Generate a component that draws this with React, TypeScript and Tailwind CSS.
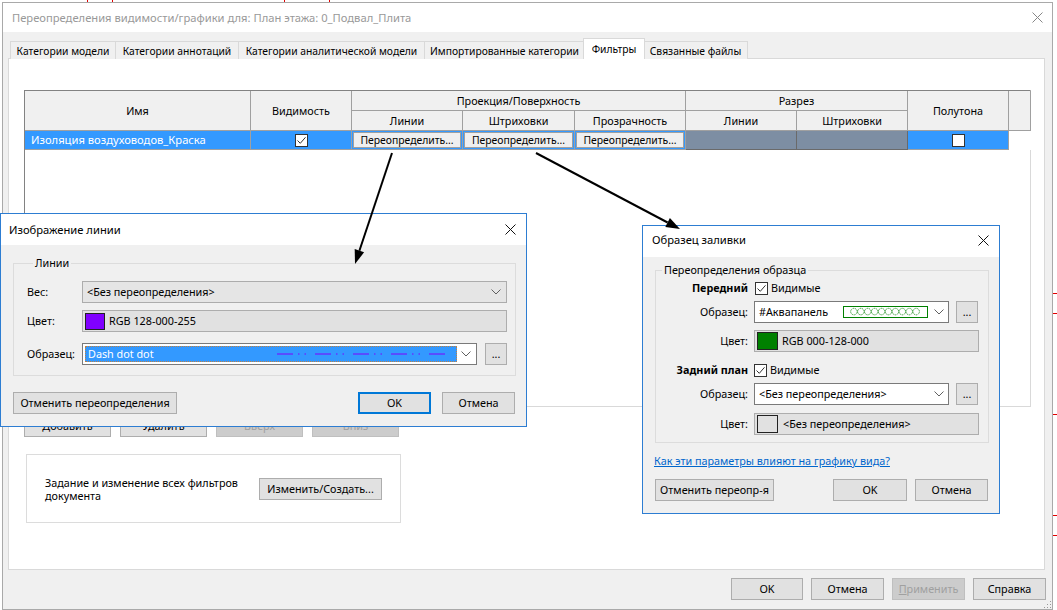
import React from "react";

const hatch = "bg-[#7d8ea3]";

function CloseX() {
  return (
    <svg width="11" height="11" viewBox="0 0 11 11">
      <path d="M0.5 0.5 L10.5 10.5 M10.5 0.5 L0.5 10.5" stroke="#111" strokeWidth="1" />
    </svg>
  );
}

function Chevron() {
  return (
    <svg width="10" height="6" viewBox="0 0 10 6">
      <path d="M0.5 0.5 L5 5 L9.5 0.5" fill="none" stroke="#606060" strokeWidth="1" />
    </svg>
  );
}

function Check({ checked }: { checked: boolean }) {
  return (
    <span className="inline-flex w-[13px] h-[13px] border border-[#333] bg-white items-center justify-center">
      {checked && (
        <svg width="11" height="11" viewBox="0 0 11 11">
          <path d="M1.5 5.5 L4.3 8.3 L9.5 2.3" fill="none" stroke="#333" strokeWidth="1" />
        </svg>
      )}
    </span>
  );
}

function Btn({
  children,
  className = "",
  primary,
  disabled,
}: {
  children: React.ReactNode;
  className?: string;
  primary?: boolean;
  disabled?: boolean;
}) {
  const look = primary
    ? "border-2 border-[#0078d7] bg-[#e1e1e1]"
    : disabled
    ? "border border-[#bfbfbf] bg-[#cccccc] text-[#a0a0a0]"
    : "border border-[#adadad] bg-[#e1e1e1]";
  return (
    <div className={`h-[22px] flex items-center justify-center shrink-0 whitespace-nowrap ${look} ${className}`}>
      {children}
    </div>
  );
}

function Dots() {
  return (
    <div className="w-[22px] h-[22px] shrink-0 border border-[#adadad] bg-[#e1e1e1] flex items-end justify-center pb-[4px] leading-none">
      ...
    </div>
  );
}

function DashDotDot() {
  return (
    <svg width="170" height="4" viewBox="0 0 170 4">
      <line x1="0" y1="2" x2="170" y2="2" stroke="#8000ff" strokeWidth="1" strokeDasharray="16 5 1.5 5 1.5 9" />
    </svg>
  );
}

function Aquapanel() {
  const rings = [];
  for (let i = 0; i < 10; i++) {
    rings.push(
      <circle key={i} cx={4.6 + i * 8.3} cy={5.5} r={3.9} fill="none" stroke="#008000" strokeWidth="0.9" strokeDasharray="1.6 0.8" />
    );
  }
  return (
    <svg width="85" height="12" viewBox="0 0 85 12" className="border border-[#008000] shrink-0">
      {rings}
    </svg>
  );
}

const hd = "flex items-center justify-center bg-[#f0f0f0] border-r border-b border-[#a0a0a0]";
const cell = "flex items-center justify-center bg-[#3399ff] border-r border-b border-[#a0a0a0]";
const cellBtn = "bg-[#3399ff] border-r border-b border-[#a0a0a0] p-[1px] flex";
const overrideBtn =
  "flex-1 flex items-center justify-center bg-[#efefef] border border-[#a0a0a0] leading-none text-[10.4px]";

function FilterTable() {
  return (
    <div className="w-[1007px] h-[317px] border-t border-l border-[#828282] border-r-[#d9d9d9] border-b-[#d9d9d9] border-r border-b bg-white">
      <div className="grid grid-cols-[226px_101px_111px_112px_111px_111px_111px_101px_22px] grid-rows-[20px_20px_19px]">
        <div className={`${hd} row-span-2`}>Имя</div>
        <div className={`${hd} row-span-2`}>Видимость</div>
        <div className={`${hd} col-span-3`}>Проекция/Поверхность</div>
        <div className={`${hd} col-span-2`}>Разрез</div>
        <div className={`${hd} row-span-2`}>Полутона</div>
        <div className={`${hd} row-span-2`}></div>
        <div className={hd}>Линии</div>
        <div className={hd}>Штриховки</div>
        <div className={hd}>Прозрачность</div>
        <div className={hd}>Линии</div>
        <div className={hd}>Штриховки</div>

        <div className={`${cell} !justify-start pl-[6px] text-white text-[11.2px]`}>Изоляция воздуховодов_Краска</div>
        <div className={cell}>
          <Check checked />
        </div>
        <div className={cellBtn}>
          <div className={overrideBtn}>Переопределить...</div>
        </div>
        <div className={cellBtn}>
          <div className={overrideBtn}>Переопределить...</div>
        </div>
        <div className={cellBtn}>
          <div className={overrideBtn}>Переопределить...</div>
        </div>
        <div className={`${hatch} border-r border-b border-[#6a6a6a]`}></div>
        <div className={`${hatch} border-r border-b border-[#6a6a6a]`}></div>
        <div className={cell}>
          <Check checked={false} />
        </div>
        <div className="bg-white"></div>
      </div>
    </div>
  );
}

function MainDialog() {
  const tabs = [
    { t: "Категории модели", w: "w-[105px]" },
    { t: "Категории аннотаций", w: "w-[123px]" },
    { t: "Категории аналитической модели", w: "w-[186px]" },
    { t: "Импортированные категории", w: "w-[160px]" },
  ];
  return (
    <div className="ml-[2px] mt-[2px] w-[1051px] h-[608px] border border-[#a9a9a9] bg-[#f0f0f0] flex flex-col">
      <div className="h-[29px] bg-white flex items-center justify-between pl-[9px] pr-[9px] text-[#999] text-[11.2px]">
        <span>Переопределения видимости/графики для: План этажа: 0_Подвал_Плита</span>
        <span className="opacity-50">
          <CloseX />
        </span>
      </div>

      <div className="pl-[5px] pt-[7px]">
        <div className="flex items-end h-[20px] pl-[2px] -mb-px relative z-10 text-[10.3px]">
          {tabs.map((tab) => (
            <div
              key={tab.t}
              className={`${tab.w} h-[18px] flex items-center justify-center border-t border-l border-[#d9d9d9] bg-[#f0f0f0]`}
            >
              {tab.t}
            </div>
          ))}
          <div className="w-[62px] h-[21px] -mx-[1px] flex items-center justify-center border-t border-l border-r border-[#d9d9d9] bg-white relative z-10">
            Фильтры
          </div>
          <div className="w-[104px] h-[18px] flex items-center justify-center border-t border-r border-[#d9d9d9] bg-[#f0f0f0]">
            Связанные файлы
          </div>
        </div>

        <div className="w-[1037px] h-[512px] border border-[#d9d9d9] bg-white pl-[15px] pt-[31px]">
          <FilterTable />
          <div className="flex gap-[9px] mt-[8px]">
            <Btn className="w-[87px]">Добавить</Btn>
            <Btn className="w-[87px]">Удалить</Btn>
            <Btn className="w-[87px]" disabled>
              Вверх
            </Btn>
            <Btn className="w-[87px]" disabled>
              Вниз
            </Btn>
          </div>
          <div className="ml-[2px] mt-[17px] w-[375px] h-[69px] border border-[#dcdcdc] flex items-center pl-[18px]">
            <div className="w-[214px] leading-[13px]">
              Задание и изменение всех фильтров
              <br />
              документа
            </div>
            <Btn className="w-[123px]">Изменить/Создать...</Btn>
          </div>
        </div>
      </div>

      <div className="flex-1 relative flex justify-end items-start gap-[8px] pt-[8px] pr-[6px]">
        <Btn className="w-[72px]">OK</Btn>
        <Btn className="w-[73px]">Отмена</Btn>
        <Btn className="w-[73px]" disabled>
          <span>
            <span className="underline">П</span>рименить
          </span>
        </Btn>
        <Btn className="w-[73px]">Справка</Btn>
        <svg width="8" height="8" viewBox="0 0 8 8" className="absolute right-0 bottom-0">
          <rect x="6" y="0" width="1" height="1" fill="#999" />
          <rect x="3" y="3" width="1" height="1" fill="#999" />
          <rect x="6" y="3" width="1" height="1" fill="#999" />
          <rect x="0" y="6" width="1" height="1" fill="#999" />
          <rect x="3" y="6" width="1" height="1" fill="#999" />
          <rect x="6" y="6" width="1" height="1" fill="#999" />
        </svg>
      </div>
    </div>
  );
}

function LineDialog() {
  return (
    <div className="absolute left-0 top-[213px] w-[527px] h-[214px] border border-[#2d7dd2] bg-[#f0f0f0] flex flex-col">
      <div className="h-[31px] bg-white flex items-center justify-between pl-[8px] pr-[10px] text-[11.2px]">
        <span>Изображение линии</span>
        <CloseX />
      </div>
      <fieldset className="mt-[10px] ml-[12px] mr-[10px] border border-[#dcdcdc] pl-[13px] pr-[8px] pb-[10px]">
        <legend className="ml-[6px] px-[2px] leading-[16px]">Линии</legend>
        <div className="flex items-center mt-[10px]">
          <span className="w-[55px]">Вес:</span>
          <div className="flex-1 h-[22px] border border-[#acacac] bg-[#e5e5e5] flex items-center justify-between pl-[4px] pr-[5px]">
            <span>&lt;Без переопределения&gt;</span>
            <Chevron />
          </div>
        </div>
        <div className="flex items-center mt-[7px]">
          <span className="w-[55px]">Цвет:</span>
          <div className="flex-1 h-[22px] border border-[#adadad] bg-[#e1e1e1] flex items-center pl-[2px]">
            <span className="w-[20px] h-[17px] bg-[#8000ff] border border-[#222] mr-[4px]"></span>
            <span>RGB 128-000-255</span>
          </div>
        </div>
        <div className="flex items-center mt-[11px]">
          <span className="w-[55px]">Образец:</span>
          <div className="flex-1 h-[22px] border border-[#7a7a7a] bg-white flex items-center p-[2px] mr-[8px]">
            <div className="flex-1 h-full bg-[#3399ff] border border-dotted border-[#c08040] flex items-center text-white pl-[2px]">
              <span className="w-[189px]">Dash dot dot</span>
              <DashDotDot />
            </div>
            <div className="w-[17px] flex justify-center">
              <Chevron />
            </div>
          </div>
          <Dots />
        </div>
      </fieldset>
      <div className="flex items-center mt-[16px] ml-[12px] mr-[11px]">
        <Btn className="w-[164px]">Отменить переопределения</Btn>
        <div className="flex-1"></div>
        <Btn className="w-[73px]" primary>
          OK
        </Btn>
        <Btn className="w-[73px] ml-[11px]">Отмена</Btn>
      </div>
    </div>
  );
}

function FillDialog() {
  return (
    <div className="absolute left-[642px] top-[225px] w-[358px] h-[289px] border border-[#2d7dd2] bg-[#f0f0f0] flex flex-col">
      <div className="h-[31px] bg-white flex items-center justify-between pl-[9px] pr-[10px] pb-[3px] text-[11.2px]">
        <span>Образец заливки</span>
        <CloseX />
      </div>
      <fieldset className="mt-[5px] ml-[12px] mr-[10px] border border-[#dcdcdc] pr-[9px] pb-[7px]">
        <legend className="ml-[6px] px-[2px] leading-[16px]">Переопределения образца</legend>
        <div className="flex items-center h-[18px] mt-[1px]">
          <span className="w-[92px] text-right font-bold">Передний</span>
          <span className="ml-[7px] flex items-center gap-[3px]">
            <Check checked />
            Видимые
          </span>
        </div>
        <div className="flex items-center mt-[4px]">
          <span className="w-[92px] text-right">Образец:</span>
          <div className="ml-[6px] w-[195px] h-[22px] border border-[#7a7a7a] bg-white flex items-center pl-[4px] pr-[4px]">
            <span className="w-[84px]">#Аквапанель</span>
            <Aquapanel />
            <div className="flex-1 flex justify-end">
              <Chevron />
            </div>
          </div>
          <div className="ml-[7px]">
            <Dots />
          </div>
        </div>
        <div className="flex items-center mt-[7px]">
          <span className="w-[92px] text-right">Цвет:</span>
          <div className="ml-[6px] flex-1 h-[22px] border border-[#adadad] bg-[#e1e1e1] flex items-center pl-[2px]">
            <span className="w-[21px] h-[18px] bg-[#008000] border border-[#222] mr-[4px]"></span>
            <span>RGB 000-128-000</span>
          </div>
        </div>
        <div className="flex items-center h-[18px] mt-[9px]">
          <span className="w-[92px] text-right font-bold">Задний план</span>
          <span className="ml-[6px] flex items-center gap-[3px]">
            <Check checked />
            Видимые
          </span>
        </div>
        <div className="flex items-center mt-[4px]">
          <span className="w-[92px] text-right">Образец:</span>
          <div className="ml-[6px] w-[195px] h-[22px] border border-[#7a7a7a] bg-white flex items-center justify-between pl-[4px] pr-[4px]">
            <span>&lt;Без переопределения&gt;</span>
            <Chevron />
          </div>
          <div className="ml-[7px]">
            <Dots />
          </div>
        </div>
        <div className="flex items-center mt-[8px]">
          <span className="w-[92px] text-right">Цвет:</span>
          <div className="ml-[6px] flex-1 h-[22px] border border-[#adadad] bg-[#e1e1e1] flex items-center pl-[2px]">
            <span className="w-[21px] h-[18px] bg-[#e1e1e1] border border-[#222] mr-[5px]"></span>
            <span>&lt;Без переопределения&gt;</span>
          </div>
        </div>
      </fieldset>
      <div className="mt-[10px] ml-[11px] text-[#0066cc] underline leading-[16px]">
        Как эти параметры влияют на графику вида?
      </div>
      <div className="flex items-center mt-[10px] ml-[12px] mr-[11px]">
        <Btn className="w-[119px]">Отменить переопр-я</Btn>
        <div className="flex-1"></div>
        <Btn className="w-[74px]">OK</Btn>
        <Btn className="w-[73px] ml-[8px]">Отмена</Btn>
      </div>
    </div>
  );
}

function Arrows() {
  return (
    <svg width="1057" height="610" className="absolute left-0 top-0 pointer-events-none">
      <line x1="392" y1="153" x2="359.4" y2="250.7" stroke="#000" strokeWidth="2" />
      <polygon points="355,264 364.1,252.3 354.7,249.1" fill="#000" />
      <line x1="536" y1="153" x2="667.6" y2="222.5" stroke="#000" strokeWidth="2" />
      <polygon points="680,229 665.3,226.9 669.9,218.1" fill="#000" />
    </svg>
  );
}

export default function App() {
  return (
    <div className="relative w-[1057px] h-[610px] overflow-hidden bg-white text-[10.8px] text-black leading-[16px] whitespace-nowrap font-['Noto_Sans','DejaVu_Sans',sans-serif]">
      <MainDialog />
      <LineDialog />
      <FillDialog />
      <Arrows />
      {/* red marks of the drawing behind the window */}
      <div className="absolute left-[87px] top-0 w-px h-[2px] bg-[#e00000]"></div>
      <div className="absolute left-[112px] top-0 w-px h-[2px] bg-[#e00000]"></div>
      <div className="absolute left-[284px] top-0 w-px h-[2px] bg-[#e00000]"></div>
      <div className="absolute left-[329px] top-0 w-px h-[2px] bg-[#e00000]"></div>
      <div className="absolute left-[1053px] top-[293px] w-[4px] h-px bg-[#e00000]"></div>
      <div className="absolute left-[1053px] top-[313px] w-[4px] h-px bg-[#e00000]"></div>
      <div className="absolute left-[1053px] top-[414px] w-[4px] h-px bg-[#e00000]"></div>
      <div className="absolute left-[1053px] top-[515px] w-[4px] h-px bg-[#e00000]"></div>
      <div className="absolute left-[1053px] top-[535px] w-[4px] h-px bg-[#e00000]"></div>
    </div>
  );
}
